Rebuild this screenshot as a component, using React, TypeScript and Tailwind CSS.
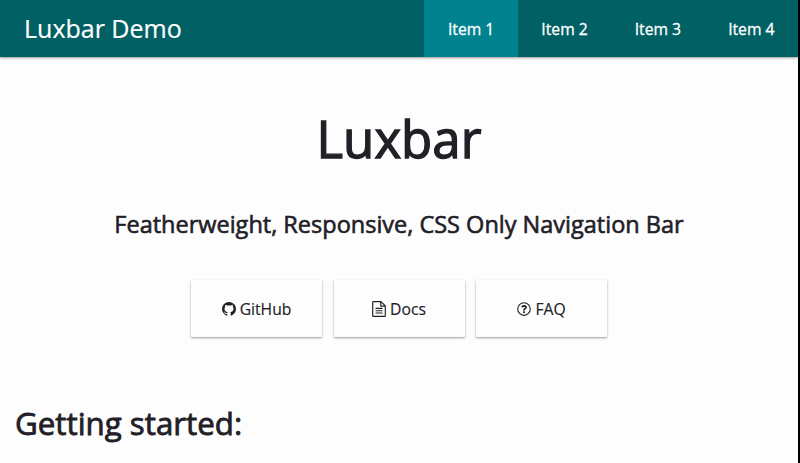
const cardClass =
  'flex h-[57px] w-[131px] items-center justify-center gap-1 rounded-[1px] bg-[#fefdfe] pt-[2px] shadow-[0_1px_3px_rgba(0,0,0,0.16),0_1px_2px_rgba(0,0,0,0.26)]';

function GithubIcon() {
  return (
    <svg viewBox="128 128 1536 1536" className="mb-px h-[14px] w-[14px]" fill="currentColor">
      <path d="M896 128q209 0 385.5 103t279.5 279.5 103 385.5q0 251-146.5 451.5t-378.5 277.5q-27 5-40-7t-13-30q0-3 .5-76.5t.5-134.5q0-97-52-142 57-6 102.5-18t94-39 81-66.5 53-105 20.5-150.5q0-119-79-206 37-91-8-204-28-9-81 11t-92 44l-38 24q-93-26-192-26t-192 26q-16-11-42.5-27t-83.5-38.5-85-13.5q-45 113-8 204-79 87-79 206 0 85 20.5 150t52.5 105 80.5 67 94 39 102.5 18q-39 36-49 103-21 10-45 15t-57 5-65.5-21.5-55.5-62.5q-19-32-48.5-52t-49.5-24l-20-3q-21 0-29 4.5t-5 11.5 9 14 13 12l7 5q22 10 43.5 38t31.5 51l10 23q13 38 44 61.5t67 30 69.5 7 55.5-3.5l23-4q0 38 .5 88.5t.5 54.5q0 18-13 30t-40 7q-232-77-378.5-277.5t-146.5-451.5q0-209 103-385.5t279.5-279.5 385.5-103z" />
    </svg>
  );
}

function DocsIcon() {
  return (
    <svg viewBox="0 0 14 16" className="mb-px h-[16px] w-[14px]" fill="none" stroke="currentColor" strokeWidth="1.15" strokeLinejoin="round" strokeLinecap="round">
      <path d="M1.2.6H9L13.3 4.9V14.8Q13.3 15.4 12.7 15.4H1.3Q.7 15.4.7 14.8V1.2Q.7.6 1.3.6ZM8.8.8V5.1H13.1M4 7.4H10.1M4 9.7H10.1M4 12H10.1" />
    </svg>
  );
}

function QuestionIcon() {
  return (
    <svg viewBox="0 0 14 14" className="mb-px h-[14px] w-[14px]" fill="none" stroke="currentColor">
      <circle cx="7" cy="7" r="6.3" strokeWidth="1.15" />
      <path d="M4.8 5.2Q5.5 3.8 7 3.8Q9 3.9 9 5.3Q9 6.2 7.9 6.8Q7 7.3 7 8.4" strokeWidth="1.7" />
      <path d="M7 9.3V11" strokeWidth="1.8" />
    </svg>
  );
}

export default function App() {
  return (
    <div className="h-[463px] w-[800px] overflow-hidden border-r-2 border-black bg-[#fefdfe] font-['Open_Sans',sans-serif] text-[#212026]">
      <header className="flex h-[57px] items-center justify-between bg-[#006064] text-white shadow-[0_1px_3px_rgba(0,0,0,0.18),0_1px_2px_rgba(0,0,0,0.25)]">
        <span className="pl-[24px] text-[25px] [-webkit-text-stroke:0.2px]">Luxbar Demo</span>
        <nav className="flex h-full text-[15.7px] [-webkit-text-stroke:0.3px]">
          <a className="flex h-full w-[93.4px] items-center justify-center bg-[#00838f] pt-[2px]">Item 1</a>
          <a className="flex h-full w-[93.4px] items-center justify-center pt-[2px]">Item 2</a>
          <a className="flex h-full w-[93.4px] items-center justify-center pt-[2px]">Item 3</a>
          <a className="flex h-full w-[93.4px] items-center justify-center pt-[2px]">Item 4</a>
        </nav>
      </header>
      <main>
        <h1 className="mt-[46px] text-center text-[51px] leading-[70px] [-webkit-text-stroke:1.3px]">Luxbar</h1>
        <h2 className="mt-[35px] text-center text-[23.5px] leading-[32px] [-webkit-text-stroke:0.6px]">Featherweight, Responsive, CSS Only Navigation Bar</h2>
        <div className="mt-[40px] flex justify-center gap-[11.5px] text-[15.7px] [-webkit-text-stroke:0.15px]">
          <a className={cardClass}><GithubIcon />GitHub</a>
          <a className={cardClass}><DocsIcon />Docs</a>
          <a className={cardClass}><QuestionIcon />FAQ</a>
        </div>
        <h2 className="mt-[64px] pl-[15px] text-[31.3px] leading-[44px] [-webkit-text-stroke:0.8px]">Getting started:</h2>
      </main>
    </div>
  );
}
